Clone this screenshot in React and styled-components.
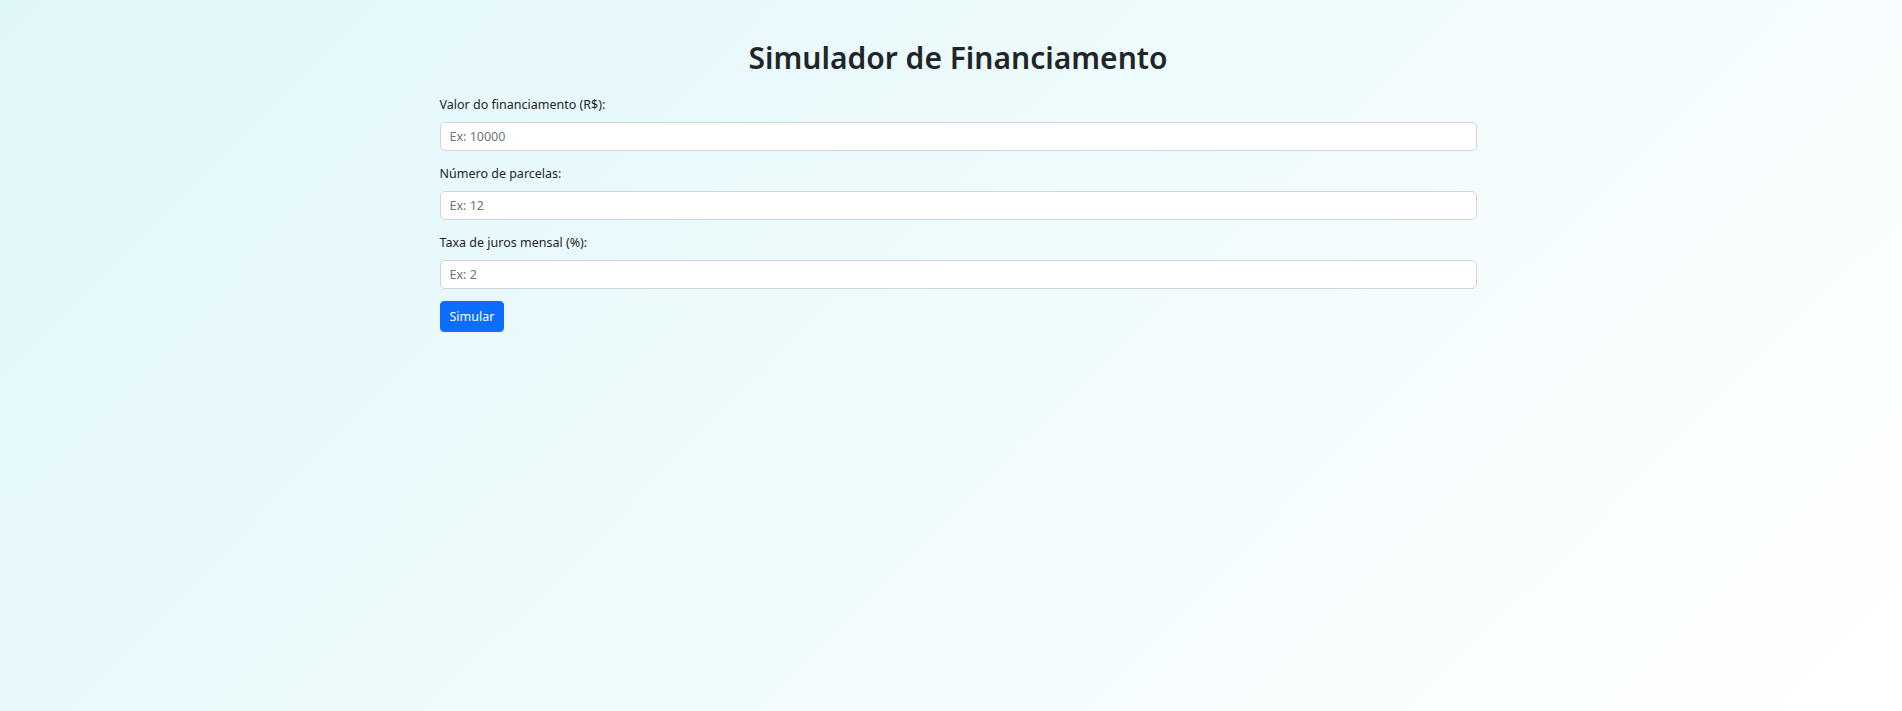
import React from "react";
import styled, { createGlobalStyle } from "styled-components";

const GlobalStyle = createGlobalStyle`
    * {
        box-sizing: border-box;
    }
    html, body {
        margin: 0;
        padding: 0;
    }
    body {
        font-family: "Noto Sans", "Open Sans", sans-serif;
        color: #212529;
    }
`;

const fields = [
    { id: "valor", label: "Valor do financiamento (R$):", placeholder: "Ex: 10000" },
    { id: "parcelas", label: "Número de parcelas:", placeholder: "Ex: 12" },
    { id: "juros", label: "Taxa de juros mensal (%):", placeholder: "Ex: 2" },
];

const App = () => {
    return (
        <Page>
            <GlobalStyle />
            <Container>
                <Title>Simulador de Financiamento</Title>
                <Form onSubmit={(e) => e.preventDefault()}>
                    {fields.map((f) => (
                        <Group key={f.id}>
                            <Label htmlFor={f.id}>{f.label}</Label>
                            <Input id={f.id} type="number" placeholder={f.placeholder} />
                        </Group>
                    ))}
                    <Button type="submit">Simular</Button>
                </Form>
            </Container>
        </Page>
    );
};

const Page = styled.div`
    min-height: 100vh;
    padding-left: 14px;
    background: linear-gradient(135deg, #e0f7fa 0%, #ffffff 100%);
`;

const Container = styled.div`
    width: 1037px;
    margin: 0 auto;
    padding-top: 40px;
`;

const Title = styled.h2`
    margin: 0 0 18px;
    font-size: 30px;
    font-weight: 600;
    line-height: 36px;
    text-align: center;
    color: #212529;
`;

const Form = styled.form`
    display: flex;
    flex-direction: column;
    align-items: flex-start;
`;

const Group = styled.div`
    width: 100%;
    margin-bottom: 12px;
`;

const Label = styled.label`
    display: block;
    margin-bottom: 7px;
    font-size: 12.5px;
    line-height: 21px;
`;

const Input = styled.input`
    display: block;
    width: 100%;
    height: 29px;
    padding: 0 9px;
    font-family: inherit;
    font-size: 12.5px;
    color: #212529;
    background: #fff;
    border: 1px solid #ced4da;
    border-radius: 5px;
    outline: none;
    -moz-appearance: textfield;
    &::placeholder {
        color: #6c757d;
    }
    &::-webkit-outer-spin-button,
    &::-webkit-inner-spin-button {
        -webkit-appearance: none;
        margin: 0;
    }
`;

const Button = styled.button`
    height: 31px;
    padding: 0 9px;
    font-family: inherit;
    font-size: 12.5px;
    color: #fff;
    background: #0d6efd;
    border: 1px solid #0d6efd;
    border-radius: 4px;
    cursor: pointer;
`;

export default App;
